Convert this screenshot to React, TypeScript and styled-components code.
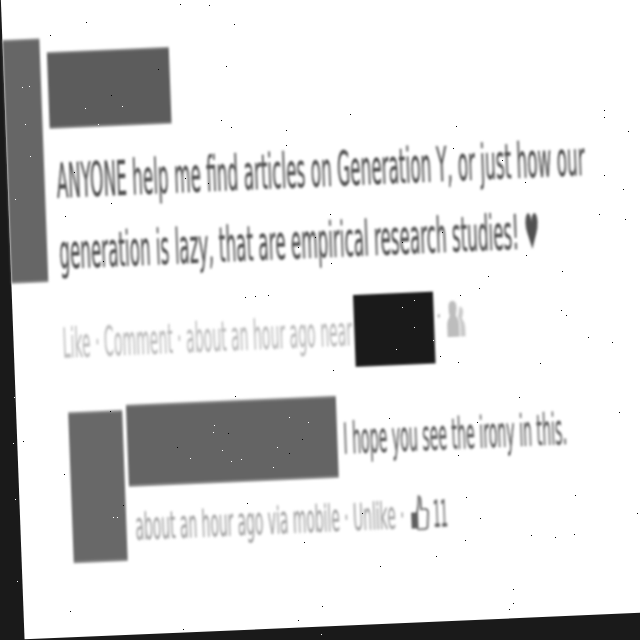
import React from "react";
import styled, { createGlobalStyle } from "styled-components";

const Global = createGlobalStyle`
  html, body { margin: 0; padding: 0; background: #1a1a1a; }
  #root { width: 640px; height: 640px; }
`;

const Page = styled.div`
  position: relative;
  width: 640px;
  height: 640px;
  overflow: hidden;
  background: #1a1a1a;
`;

const Sheet = styled.div`
  width: 720px;
  height: 650px;
  background: #fff;
  transform-origin: 0 0;
  transform: matrix(0.999, -0.043, 0.037, 0.999, 0.5, -10);
`;

const Content = styled.div`
  display: flex;
  gap: 7px;
  padding-top: 50px;
  filter: blur(0.85px);
  font-family: "DejaVu Sans", sans-serif;
`;

const Redaction = styled.div<{ $w: number; $h: number; $shade: string }>`
  flex: none;
  width: ${(p) => p.$w}px;
  height: ${(p) => p.$h}px;
  background: ${(p) => p.$shade};
  border-top: 2px solid #8c8c8c;
  border-bottom: 2px solid #8f8f8f;
  box-sizing: border-box;
`;

const Main = styled.div`
  display: flex;
  flex-direction: column;
  align-items: flex-start;
`;

const NameBlock = styled(Redaction)`
  margin-top: 14px;
`;

const Squeezed = styled.div<{ $size: number; $lh: number; $sx: number; $color: string }>`
  font-size: ${(p) => p.$size}px;
  line-height: ${(p) => p.$lh}px;
  color: ${(p) => p.$color};
  -webkit-text-stroke: 0.4px ${(p) => p.$color};
  white-space: nowrap;
  transform-origin: 0 50%;
  transform: scaleX(${(p) => p.$sx});
`;

const Message = styled.div`
  margin-top: 17px;
  padding-left: 5px;
`;

const MetaRow = styled.div`
  display: flex;
  margin-top: 20px;
  height: 71px;
`;

const MetaSlot = styled.div`
  width: 292px;
  padding-left: 5px;
  padding-top: 1px;
`;

const Black = styled.div`
  flex: none;
  width: 80px;
  height: 71px;
  background: #1a1a1a;
  border-bottom: 1px solid #555;
`;

const Dot = styled.span`
  width: 2px;
  height: 3px;
  margin: 23px 0 0 4px;
  background: #aaa;
`;

const PeopleIcon = styled.svg`
  width: 20px;
  height: 42px;
  margin: 8px 0 0 6px;
`;

const CommentRow = styled.div`
  display: flex;
  gap: 4px;
  margin: 29px 0 0 8px;
`;

const CommentAvatar = styled(Redaction)`
  margin-top: 5px;
`;

const CommentBody = styled.div`
  display: flex;
  flex-direction: column;
`;

const CommentTop = styled.div`
  display: flex;
  gap: 6px;
`;

const CommentText = styled.div`
  padding-top: 3px;
`;

const CommentMeta = styled.div`
  display: flex;
  margin-top: 7px;
  height: 60px;
  padding-left: 5px;
`;

const CommentMetaSlot = styled.div`
  width: 276px;
`;

const ThumbIcon = styled.svg`
  width: 18px;
  height: 38px;
  margin-top: 10px;
`;

const CountSlot = styled.div`
  margin-left: 4px;
`;

const Specks = styled.svg`
  position: absolute;
  inset: 0;
  width: 640px;
  height: 640px;
  pointer-events: none;
`;

type Group = [number, number, string, number[]];
const specks: Group[] = [
  [0, 0, "#000", [541,13,628,15,259,67,703,73,151,105,679,199,474,207,333,285,664,361,694,381,858,391,858,436,222,517,556,535,625,549,333,610,196,649,944,710,895,740,309,783,736,892,766,888,805,885]],
  [0, 0, "#fff", [67,261,86,258,76,372,91,468,45,597,255,325,367,318,295,372]],
  [320, 100, "#000", [853,30,853,52,925,92,90,43,408,78,400,145,851,225,546,180,616,246,910,268,30,342,837,342,916,358,365,397,245,425,33,490,618,466,505,528,478,565,727,513,420,585,723,630,738,645,805,712,877,727,415,785,660,790,360,768,38,810]],
  [320, 100, "#fff", [282,600,245,622,283,680,338,720,228,748]],
  [0, 380, "#000", [706,48,331,92,70,182,193,283,370,375,742,370,913,487,211,692,549,748,895,721,683,158,530,202,907,177,866,220]],
  [0, 380, "#fff", [642,135,640,157,868,110,925,125,665,210,832,202,570,235,692,244,722,238,820,260,340,412,350,412,38,190,45,358,52,602,42,50]],
  [320, 380, "#000", [598,52,898,97,206,115,470,127,415,225,439,352,766,346,481,415,436,481,634,465,706,472,763,463,349,528,181,558,580,626,580,670,568,686,7,679,952,400,125,400]],
  [320, 380, "#fff", [2,762]],
];

const Speckle = () => (
  <Specks viewBox="0 0 640 640">
    {specks.flatMap(([ox, oy, fill, pts], g) =>
      pts
        .filter((_, i) => i % 2 === 0)
        .map((x, i) => (
          <rect
            key={`${g}-${i}`}
            x={ox + Math.round(x / 3)}
            y={oy + Math.round(pts[i * 2 + 1] / 3)}
            width="1"
            height="1"
            fill={fill}
          />
        ))
    )}
  </Specks>
);

export default function App() {
  return (
    <Page>
      <Global />
      <Sheet>
        <Content>
          <Redaction $w={37} $h={244} $shade="#666" />
          <Main>
            <NameBlock $w={122} $h={77} $shade="#5c5c5c" />
            <Message>
              <Squeezed $size={48} $lh={71} $sx={0.352} $color="#505050">
                ANYONE help me find articles on Generation Y, or just how our
              </Squeezed>
              <Squeezed $size={48} $lh={71} $sx={0.35} $color="#505050">
                generation is lazy, that are empirical research studies! ♥
              </Squeezed>
            </Message>
            <MetaRow>
              <MetaSlot>
                <Squeezed $size={40} $lh={71} $sx={0.351} $color="#bcbcbc">
                  Like · Comment · about an hour ago near
                </Squeezed>
              </MetaSlot>
              <Black />
              <Dot />
              <PeopleIcon viewBox="0 0 20 42">
                <path
                  d="M7 2c3 0 4 3 4 7 0 3-1 6-1 8 2 3 3 5 3 9v12H1V26c0-4 2-7 3-9-1-2-1-5-1-8 0-4 1-7 4-7z"
                  fill="#bdbdbd"
                />
                <path d="M14 8c3 0 4 4 3 8l-1 4c2 3 3 6 3 10v8h-5V26c0-3-1-6-2-8 1-3 1-6 2-10z" fill="#cacaca" />
              </PeopleIcon>
            </MetaRow>
            <CommentRow>
              <CommentAvatar $w={54} $h={151} $shade="#686868" />
              <CommentBody>
                <CommentTop>
                  <Redaction $w={210} $h={82} $shade="#646464" />
                  <CommentText>
                    <Squeezed $size={42} $lh={82} $sx={0.337} $color="#5c5c5c">
                      I hope you see the irony in this.
                    </Squeezed>
                  </CommentText>
                </CommentTop>
                <CommentMeta>
                  <CommentMetaSlot>
                    <Squeezed $size={38} $lh={60} $sx={0.365} $color="#a4a4a4">
                      about an hour ago via mobile · Unlike ·
                    </Squeezed>
                  </CommentMetaSlot>
                  <ThumbIcon viewBox="0 0 18 38">
                    <path
                      d="M8 2c2 0 2 3 2 6v7h4c2 0 3 2 3 4l-1 13c0 2-1 3-3 3H7c-1 0-1-1-1-2V18c1-4 2-10 2-16z"
                      fill="none"
                      stroke="#777"
                      strokeWidth="2"
                    />
                    <rect x="0" y="18" width="6" height="16" fill="#5e5e5e" />
                  </ThumbIcon>
                  <CountSlot>
                    <Squeezed $size={38} $lh={60} $sx={0.3} $color="#5e5e5e">
                      11
                    </Squeezed>
                  </CountSlot>
                </CommentMeta>
              </CommentBody>
            </CommentRow>
          </Main>
        </Content>
      </Sheet>
      <Speckle />
    </Page>
  );
}
